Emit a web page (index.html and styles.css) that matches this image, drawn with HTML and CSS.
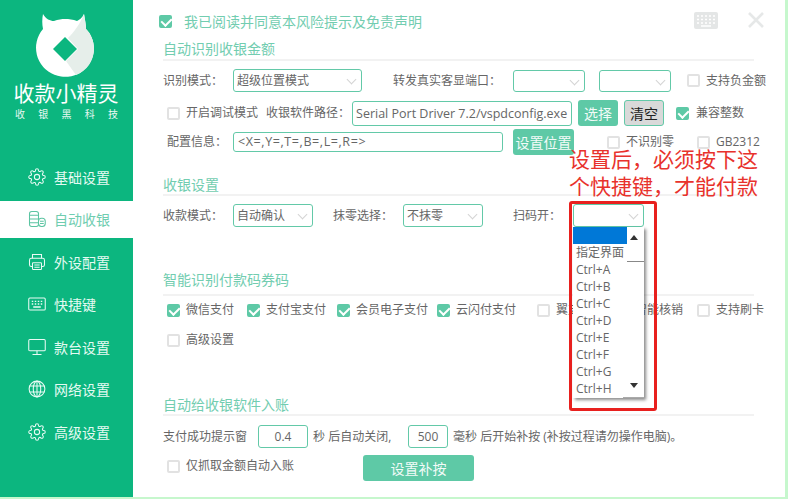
FILE: index.html
```html
<!DOCTYPE html>
<html lang="zh">
<head>
<meta charset="utf-8">
<title>收款小精灵</title>
<link rel="stylesheet" href="styles.css">
</head>
<body>
<div class="app">
  <aside class="sidebar">
    <div class="brand">
      <svg class="logo" width="133" height="80" viewBox="0 0 133 80">
        <path fill="#fff" d="M43 14C46 19 50 21 54 21C58 19.500 62 19 65 19C69 19 73 19.500 77 21C79 20 82 18 84 14C85 20 86 25 86 29C91 34 94 41 94 49A29 29 0 1 1 43 29C42 24 42 19 43 14Z"/>
        <path fill="#e6eeea" d="M84 14C85 20 86 25 86 29C91 34 94 41 94 49C94 60 87 71 76 75L66 61L78 49L68 38C74 32 80 24 84 14Z"/>
        <path fill="#0cb67f" d="M65 37L77 49L65 61L53 49Z"/>
      </svg>
      <div class="brand-name">收款小精灵</div>
      <div class="brand-sub"><span>收</span><span>银</span><span>黑</span><span>科</span><span>技</span></div>
    </div>
    <nav class="nav">
      <a class="nav-item">
        <svg class="nav-icon" viewBox="0 0 24 24"><circle cx="12" cy="12" r="3.500"/><path d="M19.400 15a1.650 1.650 0 0 0 .33 1.820l.06.06a2 2 0 0 1 0 2.830 2 2 0 0 1-2.830 0l-.06-.06a1.650 1.650 0 0 0-1.820-.33 1.650 1.650 0 0 0-1 1.510V21a2 2 0 0 1-2 2 2 2 0 0 1-2-2v-.09A1.650 1.650 0 0 0 9 19.400a1.650 1.650 0 0 0-1.820.33l-.06.06a2 2 0 0 1-2.830 0 2 2 0 0 1 0-2.830l.06-.06a1.650 1.650 0 0 0 .33-1.820 1.650 1.650 0 0 0-1.510-1H3a2 2 0 0 1-2-2 2 2 0 0 1 2-2h.09A1.650 1.650 0 0 0 4.600 9a1.650 1.650 0 0 0-.33-1.820l-.06-.06a2 2 0 0 1 0-2.830 2 2 0 0 1 2.830 0l.06.06a1.650 1.650 0 0 0 1.820.33H9a1.650 1.650 0 0 0 1-1.510V3a2 2 0 0 1 2-2 2 2 0 0 1 2 2v.09a1.650 1.650 0 0 0 1 1.510 1.650 1.650 0 0 0 1.820-.33l.06-.06a2 2 0 0 1 2.830 0 2 2 0 0 1 0 2.830l-.06.06a1.650 1.650 0 0 0-.33 1.820V9a1.650 1.650 0 0 0 1.510 1H21a2 2 0 0 1 2 2 2 2 0 0 1-2 2h-.09a1.650 1.650 0 0 0-1.510 1z"/></svg>
        基础设置
      </a>
      <a class="nav-item active">
        <svg class="nav-icon" viewBox="0 0 24 24"><rect x="2" y="2" width="12" height="20" rx="3"/><path d="M2 7h12M2 12h12M2 17h12"/><rect class="coin" x="14" y="11" width="9" height="11" rx="4"/><path d="M16 15h5M16 18h5"/></svg>
        自动收银
      </a>
      <a class="nav-item">
        <svg class="nav-icon" viewBox="0 0 24 24"><path d="M6 7V2h12v5"/><rect x="2" y="7" width="20" height="11" rx="2.500"/><rect class="fill-side" x="6" y="13" width="12" height="9" rx="1"/><path d="M8.500 16h7M8.500 19h7"/></svg>
        外设配置
      </a>
      <a class="nav-item">
        <svg class="nav-icon" viewBox="0 0 24 24"><rect x="1" y="4" width="22" height="16" rx="1.500"/><path d="M5 8.500h2M9 8.500h2M13 8.500h2M17 8.500h2M5 12h2M9 12h2M13 12h2M17 12h2M7 16h10" stroke-width="1.800"/></svg>
        快捷键
      </a>
      <a class="nav-item">
        <svg class="nav-icon" viewBox="0 0 24 24"><rect x="1" y="2" width="22" height="15" rx="1.500"/><path d="M12 17v5M6 22h12"/></svg>
        款台设置
      </a>
      <a class="nav-item">
        <svg class="nav-icon" viewBox="0 0 24 24"><circle cx="12" cy="12" r="10.500"/><ellipse cx="12" cy="12" rx="5" ry="10.500"/><path d="M12 1.500v21M2 8h20M2 16h20"/></svg>
        网络设置
      </a>
      <a class="nav-item">
        <svg class="nav-icon" viewBox="0 0 24 24"><circle cx="12" cy="12" r="3.500"/><path d="M19.400 15a1.650 1.650 0 0 0 .33 1.820l.06.06a2 2 0 0 1 0 2.830 2 2 0 0 1-2.830 0l-.06-.06a1.650 1.650 0 0 0-1.820-.33 1.650 1.650 0 0 0-1 1.510V21a2 2 0 0 1-2 2 2 2 0 0 1-2-2v-.09A1.650 1.650 0 0 0 9 19.400a1.650 1.650 0 0 0-1.820.33l-.06.06a2 2 0 0 1-2.830 0 2 2 0 0 1 0-2.830l.06-.06a1.650 1.650 0 0 0 .33-1.820 1.650 1.650 0 0 0-1.510-1H3a2 2 0 0 1-2-2 2 2 0 0 1 2-2h.09A1.650 1.650 0 0 0 4.600 9a1.650 1.650 0 0 0-.33-1.820l-.06-.06a2 2 0 0 1 0-2.830 2 2 0 0 1 2.830 0l.06.06a1.650 1.650 0 0 0 1.820.33H9a1.650 1.650 0 0 0 1-1.510V3a2 2 0 0 1 2-2 2 2 0 0 1 2 2v.09a1.650 1.650 0 0 0 1 1.510 1.650 1.650 0 0 0 1.820-.33l.06-.06a2 2 0 0 1 2.830 0 2 2 0 0 1 0 2.830l-.06.06a1.650 1.650 0 0 0-.33 1.820V9a1.650 1.650 0 0 0 1.510 1H21a2 2 0 0 1 2 2 2 2 0 0 1-2 2h-.09a1.650 1.650 0 0 0-1.510 1z"/></svg>
        高级设置
      </a>
    </nav>
  </aside>

  <main class="main">
    <div class="row row-top">
      <span class="check on cb-top"></span>
      <span class="agree">我已阅读并同意本风险提示及免责声明</span>
      <svg class="kbd" viewBox="0 0 24 17" width="24" height="17"><rect x="0" y="0" width="24" height="17" rx="2" fill="#e4e6e6"/><path d="M3 4h2M7 4h2M11 4h2M15 4h2M19 4h2M3 7.500h2M7 7.500h2M11 7.500h2M15 7.500h2M19 7.500h2M3 11h2M7 11h2M11 11h2M15 11h2M19 11h2" stroke="#fff" stroke-width="1.500"/><path d="M7 14h10" stroke="#fff" stroke-width="1.500"/></svg>
      <svg class="close" viewBox="0 0 16 16" width="16" height="16"><path d="M1 1L15 15M15 1L1 15" stroke="#e6e8e8" stroke-width="2.600"/></svg>
    </div>

    <h2 class="section s1">自动识别收银金额</h2>

    <div class="row r1">
      <span class="label w70">识别模式：</span>
      <div class="select w129">超级位置模式<i class="caret"></i></div>
      <span class="label ml31 w120">转发真实客显端口：</span>
      <div class="select w72 short"><i class="caret"></i></div>
      <div class="select w72 short ml14"><i class="caret"></i></div>
      <span class="check ml16"></span><span class="label ml6">支持负金额</span>
    </div>

    <div class="row r2">
      <span class="check ml4"></span><span class="label ml6">开启调试模式</span>
      <span class="label ml8">收银软件路径：</span>
      <div class="input path">Serial Port Driver 7.2/vspdconfig.exe</div>
      <button class="btn pick">选择</button>
      <button class="btn clear">清空</button>
      <span class="check on ml12"></span><span class="label ml7">兼容整数</span>
    </div>

    <div class="row r3">
      <span class="label ml4 w66">配置信息：</span>
      <div class="input cfg">&lt;X=,Y=,T=,B=,L=,R=&gt;</div>
      <button class="btn pos">设置位置</button>
      <span class="check ml33"></span><span class="label ml6">不识别零</span>
      <span class="check ml23"></span><span class="label ml6">GB2312</span>
    </div>

    <h2 class="section s2">收银设置</h2>

    <div class="row r4">
      <span class="label w70">收款模式：</span>
      <div class="select w80">自动确认<i class="caret"></i></div>
      <span class="label ml20 w70">抹零选择：</span>
      <div class="select w80">不抹零<i class="caret"></i></div>
      <span class="label ml30 w60">扫码开：</span>
      <div class="select w71"><i class="caret"></i></div>
    </div>

    <h2 class="section s3">智能识别付款码券码</h2>

    <div class="row r5">
      <span class="check on ml4"></span><span class="label ml6 w61">微信支付</span>
      <span class="check on"></span><span class="label ml6 w71">支付宝支付</span>
      <span class="check on"></span><span class="label ml6 w81">会员电子支付</span>
      <span class="check on"></span><span class="label ml6 w81">云闪付支付</span>
      <span class="check"></span><span class="label ml6 w60">翼支付</span>
      <span class="check"></span><span class="label ml6 w62">智能核销</span>
      <span class="check"></span><span class="label ml6">支持刷卡</span>
    </div>

    <div class="row r6">
      <span class="check ml4"></span><span class="label ml6">高级设置</span>
    </div>

    <h2 class="section s4">自动给收银软件入账</h2>

    <div class="row r7">
      <span class="label">支付成功提示窗</span>
      <div class="input num w50">0.4</div>
      <span class="label ml5 w89">秒 后自动关闭,</span>
      <div class="input num w40">500</div>
      <span class="label ml5">毫秒 后开始补按 (补按过程请勿操作电脑)。</span>
    </div>

    <div class="row r8">
      <span class="check ml4"></span><span class="label ml6 w177">仅抓取金额自动入账</span>
      <button class="btn apply">设置补按</button>
    </div>

    <div class="note">设置后，必须按下这<br>个快捷键，才能付款</div>

    <div class="dropdown">
      <div class="dd-selected"></div>
      <div class="dd-item">指定界面</div>
      <div class="dd-item">Ctrl+A</div>
      <div class="dd-item">Ctrl+B</div>
      <div class="dd-item">Ctrl+C</div>
      <div class="dd-item">Ctrl+D</div>
      <div class="dd-item">Ctrl+E</div>
      <div class="dd-item">Ctrl+F</div>
      <div class="dd-item">Ctrl+G</div>
      <div class="dd-item">Ctrl+H</div>
      <i class="dd-up"></i><i class="dd-thumb"></i><i class="dd-down"></i><i class="dd-foot"></i>
    </div>

    <div class="redbox"></div>
  </main>
</div>
</body>
</html>
```

FILE: styles.css
```css
* { box-sizing: border-box; }
html, body { margin: 0; height: 100%; }
body {
  width: 788px;
  height: 499px;
  overflow: hidden;
  background: #c6f7cd;
  font-family: "Open Sans", "Noto Sans CJK SC", sans-serif;
  font-size: 12px;
  color: #666;
}
.app { display: flex; width: 785px; height: 497px; background: #fff; overflow: hidden; }

.sidebar { width: 133px; flex: none; background: #0cb67f; color: #fff; }
.brand { height: 158px; }
.logo { display: block; height: 80px; }
.brand-name { font-size: 21px; line-height: 26px; text-align: center; padding-right: 1px; }
.brand-sub { display: flex; justify-content: space-between; font-size: 10px; line-height: 14px; margin: 1px 15px 0 15px; color: #e8f8f2; }
.nav-item { display: flex; align-items: center; height: 37px; margin-bottom: 5.500px; padding-left: 28px; font-size: 14px; color: #e4faf2; }
.nav-item.active { background: #fff; color: #6fcdb0; }
.nav-icon { width: 18px; height: 18px; margin-right: 8px; fill: none; stroke: #eafbf5; stroke-width: 1.400; flex: none; }
.active .nav-icon { stroke: #5cc4a2; }
.active .coin { fill: #fff; }
.fill-side { fill: #0cb67f; }

.main { position: relative; flex: 1; padding: 6px 0 0 30px; overflow: hidden; }
.row { display: flex; align-items: center; white-space: nowrap; width: 601px; }
.row-top { height: 30px; }
.cb-top { margin-left: -4px; }
.agree { margin-left: 12px; font-size: 14px; color: #72cdb0; width: 515px; }
.kbd { flex: none; margin-top: -1px; }
.close { flex: none; margin: -3px 0 0 30px; }

.section { margin: 0; width: 591px; height: 22px; font-size: 14px; font-weight: 400; line-height: 20px; color: #72cdb0; border-bottom: 2px solid #f2f2f2; }
.s1 { margin-top: 3px; }
.s2 { margin-top: 20px; height: 21px; }
.s3 { margin-top: 43px; height: 26px; }
.s4 { margin-top: 47px; height: 21px; }

.r1 { height: 23px; margin-top: 8px; }
.r2 { height: 26px; margin-top: 8px; }
.r3 { height: 26px; margin-top: 3px; }
.r4 { height: 23px; margin-top: 8px; }
.r5 { height: 16px; margin-top: 6px; }
.r6 { height: 16px; margin-top: 14px; }
.r7 { height: 23px; margin-top: 9px; }
.r8 { height: 30px; margin-top: 3px; }

.label { flex: none; font-size: 12px; line-height: 16px; color: #666; }
.w60 { width: 60px; } .w61 { width: 61px; } .w62 { width: 62px; }
.w66 { width: 66px; } .w70 { width: 70px; } .w71 { width: 71px; } .w81 { width: 81px; } .w89 { width: 89px; }
.w120 { width: 120px; } .w177 { width: 177px; }
.ml4 { margin-left: 4px; } .ml5 { margin-left: 5px; } .ml6 { margin-left: 6px; } .ml7 { margin-left: 7px; } .ml8 { margin-left: 8px; }
.ml12 { margin-left: 12px; } .ml14 { margin-left: 14px; } .ml16 { margin-left: 16px; }
.ml20 { margin-left: 20px; } .ml23 { margin-left: 23px; } .ml30 { margin-left: 30px; } .ml31 { margin-left: 31px; } .ml33 { margin-left: 33px; }

.check { position: relative; flex: none; width: 13px; height: 13px; border: 2px solid #e2e2e2; border-radius: 2px; background: #fff; }
.check.on { background: #5ec9a6; border-color: #5ec9a6; }
.check.on::after { content: ""; position: absolute; left: 2px; top: -1px; width: 5px; height: 8px; border: solid #fff; border-width: 0 2px 2px 0; transform: rotate(45deg); }

.select { position: relative; flex: none; height: 23px; line-height: 21px; padding-left: 3px; border: 1px solid #63c9a8; border-radius: 3px; background: #fff; font-size: 12px; color: #666; }
.short { height: 22px; }
.w129 { width: 129px; } .w72 { width: 72px; } .w80 { width: 80px; } .w71 { width: 71px; }
.caret { position: absolute; right: 6px; top: 6px; width: 7px; height: 7px; border: solid #d4d4d4; border-width: 0 1.500px 1.500px 0; transform: rotate(45deg); }

.input { flex: none; border: 1px solid #63c9a8; border-radius: 3px; background: #fff; color: #666; }
.path { width: 220px; height: 25px; line-height: 23px; margin-left: 2px; padding-left: 3px; font-size: 12.500px; overflow: hidden; }
.cfg { width: 270px; height: 20px; line-height: 18px; padding-left: 4px; font-size: 12.500px; letter-spacing: .6px; }
.num { height: 23px; line-height: 22px; text-align: center; font-size: 12px; }
.w50 { width: 50px; margin-left: 11px; } .w40 { width: 40px; margin-left: 6px; }

.btn { flex: none; padding: 0; border: 0; border-radius: 3px; background: #5ec9a6; color: #f2fbf8; font-family: inherit; font-size: 14px; }
.pick { width: 40px; height: 26px; margin-left: 6px; }
.clear { width: 40px; height: 26px; margin-left: 6px; background: #d9d9d9; border: 1px solid #63c9a8; color: #222; }
.pos { width: 61px; height: 26px; margin-left: 10px; }
.apply { width: 111px; height: 26px; margin-top: 4px; }

.note { position: absolute; left: 436px; top: 146px; width: 200px; font-size: 21px; line-height: 27px; color: #e8322c; white-space: nowrap; }
.redbox { position: absolute; left: 436px; top: 201px; width: 88px; height: 210px; border: 3px solid #e8201e; border-radius: 3px; }

.dropdown { position: absolute; left: 440px; top: 227px; width: 71px; height: 171px; padding-top: 17px; background: #fff; box-shadow: 2px 2px 3px rgba(60,60,60,.6); color: #666; }
.dd-selected { position: absolute; left: 0; top: 0; width: 54px; height: 17px; background: #0078d7; }
.dd-item { height: 17px; line-height: 17px; padding-left: 3px; font-size: 12px; }
.dd-up, .dd-down { position: absolute; left: 57px; width: 0; height: 0; border: 4px solid transparent; }
.dd-up { top: 4px; border-bottom: 5px solid #333; }
.dd-down { bottom: 6px; border-top: 5px solid #333; }
.dd-thumb { position: absolute; left: 54px; top: 34px; width: 17px; height: 1px; background: #888; }
.dd-foot { position: absolute; left: 50px; bottom: 0; width: 21px; height: 1px; background: #aaa; }
```
